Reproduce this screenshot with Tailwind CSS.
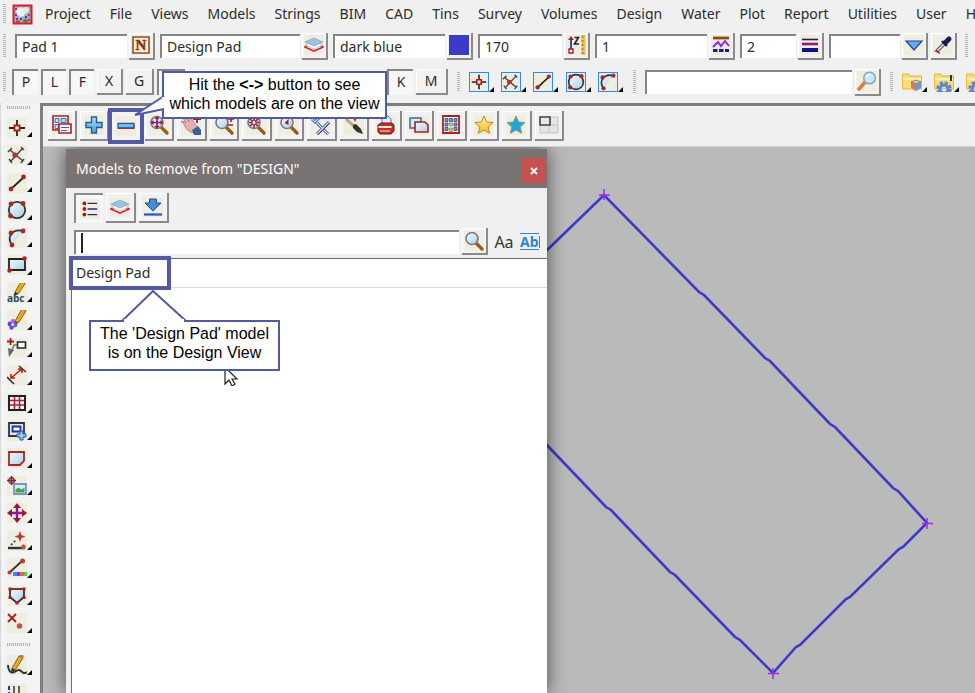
<!DOCTYPE html>
<html lang="en">
<head>
  <meta charset="UTF-8">
  <meta name="viewport" content="width=device-width, initial-scale=1.0">
  <title>DESIGN view</title>
  <script src="https://cdn.jsdelivr.net/npm/@tailwindcss/browser@4"></script>
</head>
<body class="relative flex h-screen flex-col overflow-hidden bg-[#f0f0f0] font-['Noto_Sans','Open_Sans',sans-serif] text-sm text-[#2b2b2b]">

  <!-- Gradients stay outside the hidden icon library, or they are not painted -->
  <svg class="absolute size-0" aria-hidden="true">
    <defs>
      <linearGradient id="sky" x1="0" y1="0" x2="1" y2="1"><stop offset="0" stop-color="#f4fafe"/><stop offset="1" stop-color="#a9cfe6"/></linearGradient>
      <linearGradient id="plus" x1="0" y1="0" x2="0" y2="1"><stop offset="0" stop-color="#9fdcfb"/><stop offset="1" stop-color="#4aa3dc"/></linearGradient>
      <linearGradient id="gold" x1="0" y1="0" x2="0" y2="1"><stop offset="0" stop-color="#fff3a0"/><stop offset="1" stop-color="#f5b81c"/></linearGradient>
    </defs>
  </svg>

  <!-- Icon library -->
  <svg class="hidden" aria-hidden="true">
    <symbol id="i-point" viewBox="0 0 20 20"><path d="M10 2v16M2 10h16" stroke="#222" stroke-width="1.800"/><path d="M7.500 7.500h5v5h-5z" fill="#fff" stroke="#b01818" stroke-width="1.800"/></symbol>
    <symbol id="i-cross" viewBox="0 0 20 20"><path d="M3 5l13 11M15 4L4 16M1 7l4-4M14 2l3 3M2 14l3 4M14 18l3-4" stroke="#444" stroke-width="1.500" fill="none"/><circle cx="8" cy="10" r="2.600" fill="#b03030"/></symbol>
    <symbol id="i-line" viewBox="0 0 20 20"><path d="M4 16L17 4" stroke="#222" stroke-width="1.800"/><circle cx="4" cy="16" r="2.400" fill="#a52a2a"/><circle cx="16.500" cy="4" r="2.400" fill="#a52a2a"/></symbol>
    <symbol id="i-circle" viewBox="0 0 20 20"><circle cx="10" cy="10" r="8.200" fill="url(#sky)" stroke="#333" stroke-width="1.800"/><g fill="#a52a2a"><circle cx="4" cy="4" r="2.400"/><circle cx="16" cy="3.500" r="2.400"/><circle cx="3.500" cy="16" r="2.400"/></g></symbol>
    <symbol id="i-arc" viewBox="0 0 20 20"><path d="M5 17C-1 9 6 0 16 3" fill="url(#sky)" stroke="#333" stroke-width="1.800"/><g fill="#a52a2a"><circle cx="5" cy="17" r="2.400"/><circle cx="4" cy="5" r="2.400"/><circle cx="16" cy="3" r="2.400"/></g></symbol>
    <symbol id="i-rect" viewBox="0 0 20 20"><path d="M2 4h16v11H2z" fill="url(#sky)" stroke="#222" stroke-width="1.800"/><circle cx="2.500" cy="15.500" r="2.200" fill="#b02020"/><circle cx="17.500" cy="3.500" r="2.200" fill="#b02020"/></symbol>
    <symbol id="i-pencil" viewBox="0 0 20 20"><path d="M8 13L15 1l4 2-7 11-4 2z" fill="#e7a81c" stroke="#6b4a10" stroke-width=".8"/><path d="M15 1l4 2 1-2-3-2z" fill="#d06a6a"/><path d="M8 13l-1 4 4-2z" fill="#222"/></symbol>
    <symbol id="i-text" viewBox="0 0 20 20"><use href="#i-pencil" x="0" y="-4" width="20" height="20"/><text x="0" y="19" font-size="10" font-weight="700" font-family="Open Sans" fill="#2d4a66">abc</text></symbol>
    <symbol id="i-symbol" viewBox="0 0 20 20"><use href="#i-pencil" y="-2" width="20" height="20"/><circle cx="3" cy="14" r="2.400" fill="#4a4adf"/><circle cx="6" cy="11.500" r="2.400" fill="#c05ad0"/><circle cx="8" cy="15" r="2.400" fill="#3a7ae0"/><circle cx="4.500" cy="17.500" r="2.200" fill="#8a3ad0"/><circle cx="5.500" cy="14.500" r="1.300" fill="#fff"/></symbol>
    <symbol id="i-leader" viewBox="0 0 20 20"><path d="M3.500 0v7M0 3.500h7" stroke="#b01818" stroke-width="1.800"/><path d="M10.500 4h8v6h-8z" fill="#fff" stroke="#222" stroke-width="1.600"/><path d="M10 7H7l-2 5" stroke="#777" stroke-width="1.600" fill="none"/><path d="M1 10l6 2-5 7z" fill="#666"/></symbol>
    <symbol id="i-dimension" viewBox="0 0 20 20"><path d="M12 1l7 6M0 12l7 7" stroke="#333" stroke-width="1.600"/><path d="M4 13L15 4M4 9v4h4M11 4h4v4" stroke="#b02020" stroke-width="1.600" fill="none"/></symbol>
    <symbol id="i-table" viewBox="0 0 20 20"><path d="M2 3h16v14H2z" fill="#f2f6fa" stroke="#222" stroke-width="2"/><path d="M7.500 4v12M12.500 4v12M3 7.500h14M3 12h14" stroke="#a8243a" stroke-width="1.600"/></symbol>
    <symbol id="i-viewport" viewBox="0 0 20 20"><path d="M2 2h15v13H2z" fill="#dbe9f2" stroke="#333" stroke-width="1.800"/><path d="M5.500 5.500h8v5h-8z" fill="#fff" stroke="#2a2ab0" stroke-width="1.800"/><path d="M13 10h3v3h3v3h-3v3h-3v-3h-3v-3h3z" fill="#8fd0f5" stroke="#27519c"/></symbol>
    <symbol id="i-polygon" viewBox="0 0 20 20"><path d="M2 4h15v9l-4 4H2z" fill="url(#sky)" stroke="#a82828" stroke-width="1.800"/></symbol>
    <symbol id="i-image" viewBox="0 0 20 20"><path d="M4.500 0v9M0 4.500h9" stroke="#2a3a80" stroke-width="1.600"/><circle cx="4.500" cy="4.500" r="2.800" fill="none" stroke="#a82020" stroke-width="1.400"/><path d="M7 8h12v10H7z" fill="#d6ecfb" stroke="#5b78b8" stroke-width="1.400"/><path d="M8.500 16.500v-3l3-2 3 2 3-2v5z" fill="#3ea83e"/></symbol>
    <symbol id="i-move" viewBox="0 0 20 20"><path d="M10 3v14M3 10h14" stroke="#8a1a9a" stroke-width="2.400"/><path d="M10 0l4 5H6zM10 20l4-5H6zM0 10l5-4v8zM20 10l-5-4v8z" fill="#a01830"/></symbol>
    <symbol id="i-trace" viewBox="0 0 20 20"><path d="M13 0l1.500 4 4 1.500-4 1.500L13 11l-1.500-4-4-1.500 4-1.500z" fill="#b04040"/><path d="M4 14l5-5" stroke="#333" stroke-width="1.600" stroke-dasharray="2 2"/><path d="M1 17h17" stroke="#333" stroke-width="2.400"/><circle cx="16.500" cy="16" r="2.400" fill="#b55"/></symbol>
    <symbol id="i-colour" viewBox="0 0 20 20"><path d="M2 15L15 3" stroke="#333" stroke-width="1.800"/><circle cx="15.500" cy="3" r="2.500" fill="#a44"/><circle cx="2.500" cy="14.500" r="2" fill="#a44"/><path d="M6 14h4v4H6z" fill="#2a8aff"/><path d="M10 14h3.500v4H10z" fill="#9a2ad0"/><path d="M13.500 14H17v4h-3.500z" fill="#ff5a2a"/><path d="M17 14h3v4h-3z" fill="#3ae03a"/></symbol>
    <symbol id="i-shield" viewBox="0 0 20 20"><path d="M3 3h14v8l-7 6-7-6z" fill="url(#sky)" stroke="#333" stroke-width="1.800"/><path d="M3 3h14" stroke="#a82828" stroke-width="1.600"/><g fill="#b02020"><path d="M1.500 1.500h3v3h-3zM15.500 1.500h3v3h-3zM1.500 10h3v3h-3zM15.500 10h3v3h-3zM8.500 15.500h3v3h-3z"/></g></symbol>
    <symbol id="i-delete" viewBox="0 0 20 20"><path d="M1 1l8 8M9 1L1 9" stroke="#a82020" stroke-width="1.800"/><circle cx="12.500" cy="13" r="2.800" fill="#b55"/></symbol>
    <symbol id="i-freehand" viewBox="0 0 20 20"><use href="#i-pencil" x="-3" y="0" width="20" height="20"/><path d="M1 10c0 4 2 9 6 7s5-3 7-1 3 3 6 1" fill="none" stroke="#333" stroke-width="2"/></symbol>
    <symbol id="i-ruler" viewBox="0 0 20 20"><path d="M2 2v18" stroke="#2a3a9a" stroke-width="2" stroke-dasharray="4 2"/><path d="M7 2v18M12 2v18" stroke="#333" stroke-width="1.500"/></symbol>

    <symbol id="i-name" viewBox="0 0 20 20"><path d="M2 2h16v16H2z" fill="#fdf0e0" stroke="#9a4a1a" stroke-width="1.600"/><text x="10" y="15" text-anchor="middle" font-size="15" font-weight="700" font-family="Liberation Serif" fill="#8a3a10" stroke="#8a3a10" stroke-width=".6">N</text></symbol>
    <symbol id="i-layers" viewBox="0 0 20 20"><path d="M1 12l9-4 9 4-9 4z" fill="#fff" stroke="#d02a2a" stroke-width="1.600"/><path d="M1 10l9-4 9 4-9 4z" fill="#f0f6fa" stroke="#a9bcc8" stroke-width=".8"/><path d="M1 7l9-4 9 4-9 4z" fill="#9cc3dd" stroke="#86a9c0" stroke-width=".8"/></symbol>
    <symbol id="i-height" viewBox="0 0 20 20"><path d="M5 3v12" stroke="#2a3a9a" stroke-width="1.800"/><path d="M2 5l3-4 3 4z" fill="#a82020"/><path d="M3 14h4v4H3z" fill="#fff" stroke="#a82020" stroke-width="1.400"/><path d="M8.500 2.500h4L8.500 9h4.500" fill="none" stroke="#222" stroke-width="1.600"/><path d="M15.500 0h4v20h-4z" fill="#f0c050"/><path d="M15.500 2h2M15.500 6h2M15.500 10h2M15.500 14h2M15.500 18h2" stroke="#805a10"/></symbol>
    <symbol id="i-style" viewBox="0 0 20 20"><path d="M2 3h16" stroke="#8a4a10" stroke-width="2.800"/><path d="M2 12l5-5 3 4 4-5 4 5" fill="none" stroke="#8a2af0" stroke-width="2"/><path d="M2 15.500h16" stroke="#1a1a8a" stroke-width="3" stroke-dasharray="4.500 1.500"/></symbol>
    <symbol id="i-weight" viewBox="0 0 20 20"><path d="M2 4.500h16" stroke="#222" stroke-width="1.600"/><path d="M2 9h16" stroke="#8a1a8a" stroke-width="2.600"/><path d="M2 15h16" stroke="#10108a" stroke-width="4"/></symbol>
    <symbol id="i-drop" viewBox="0 0 20 20"><path d="M2 6h16l-8 9z" fill="#6aa8f0" stroke="#1c4a98" stroke-width="1.200"/></symbol>
    <symbol id="i-dropper" viewBox="0 0 20 20"><path d="M4 16l8-8" stroke="#444" stroke-width="3.600"/><path d="M4 16l8-8" stroke="#e8eef2" stroke-width="1.600"/><path d="M9 6l5 5" stroke="#141c3a" stroke-width="2.400"/><path d="M12.500 7.500L16 4" stroke="#141c5a" stroke-width="5" stroke-linecap="round"/><path d="M1 16c2-2 6 0 6 3z" fill="#b02020"/></symbol>
    <symbol id="i-find" viewBox="0 0 20 20"><path d="M2 18l7-8" stroke="#d8803a" stroke-width="3.600" stroke-linecap="round"/><circle cx="12.500" cy="7" r="5.800" fill="#c6ebfb" stroke="#8aa8c0" stroke-width="1.600"/><path d="M9 6c1-2 3-3 5-2" stroke="#fff" stroke-width="1.600" fill="none"/></symbol>
    <symbol id="i-glass" viewBox="0 0 20 20"><path d="M12.500 12.500l5.500 5.500" stroke="#9a5a20" stroke-width="3.200" stroke-linecap="round"/><circle cx="8" cy="7.500" r="6" fill="url(#sky)" stroke="#778" stroke-width="1.600"/></symbol>
    <symbol id="i-folder" viewBox="0 0 20 20"><path d="M.500 2h6.500l2 2h10.500v13H.500z" fill="#f9dc7c" stroke="#e3b840"/><path d="M1 7h18" stroke="#fbeeb0" stroke-width="2"/></symbol>
    <symbol id="i-folder-cube" viewBox="0 0 20 20"><use href="#i-folder"/><path d="M9 10l5-2 5 2v6l-5 3-5-3z" fill="#d87a5a"/><path d="M14 12v7l5-3v-6z" fill="#6aa0c8"/><path d="M9 10l5-2 5 2-5 2z" fill="#cfc8b8" stroke="#666" stroke-width=".6"/></symbol>
    <symbol id="i-folder-gear" viewBox="0 0 20 20"><use href="#i-folder"/><path d="M17 3v6" stroke="#222" stroke-width="1.800"/><circle cx="10" cy="17" r="6" fill="none" stroke="#5a86d8" stroke-width="3.500" stroke-dasharray="3 1.700"/><circle cx="10" cy="17" r="4" fill="none" stroke="#5a86d8" stroke-width="3"/></symbol>

    <symbol id="i-views" viewBox="0 0 20 20"><path d="M1 1h15v14H1z" fill="#fff" stroke="#b02020" stroke-width="1.600"/><path d="M3 3.500h4v4H3zM9 3.500h5v4H9zM3 9.500h4v4H3z" fill="#b8dcf4" stroke="#3a6aa8"/><path d="M7 9h12v9H7z" fill="#eaf5fc" stroke="#b02020" stroke-width="1.600"/><path d="M9 12.500h8M9 15.500h6" stroke="#3a6aa8"/></symbol>
    <symbol id="i-add" viewBox="0 0 20 20"><path d="M7.500 2h5v5.500H18v5h-5.500V18h-5v-5.500H2v-5h5.500z" fill="url(#plus)" stroke="#2a5a98" stroke-width="1.400"/></symbol>
    <symbol id="i-remove" viewBox="0 0 20 20"><path d="M2 7.500h16v4.500H2z" fill="url(#plus)" stroke="#2a5a98" stroke-width="1.300"/><path d="M2 12.500h16V8" fill="none" stroke="#a03048"/></symbol>
    <symbol id="i-fit" viewBox="0 0 20 20"><use href="#i-glass"/><path d="M8 2.500v10M3 7.500h10" stroke="#8a1a6a" stroke-width="1.600"/><path d="M8 1l2.500 3h-5zM8 14l2.500-3h-5zM1.500 7.500l3-2.500v5zM14.500 7.500l-3-2.500v5z" fill="#a01830"/></symbol>
    <symbol id="i-pan" viewBox="0 0 20 20"><path d="M0 7l2-1 3 2-3-5 2-1 4 5-2-5 2-1 6 8 3 4-4 5c-5-1-8-3-11-11z" fill="#e6b0b0" stroke="#b07070" stroke-width=".8"/><path d="M11 15l6-4 3 4v5h-7z" fill="#3a6098"/><path d="M16 0v8M12 4h8" stroke="#b01830" stroke-width="1.800"/></symbol>
    <symbol id="i-zoom" viewBox="0 0 20 20"><use href="#i-glass"/><path d="M14 4h6M17 1v6M13 10h6" stroke="#a82020" stroke-width="1.600"/></symbol>
    <symbol id="i-zoom-in" viewBox="0 0 20 20"><use href="#i-glass"/><path d="M4 4l8 7M12 4l-8 7M8 2v11M3 7.500h10" stroke="#a01828" stroke-width="1.500"/><circle cx="8" cy="7.500" r="1.500" fill="#fff"/></symbol>
    <symbol id="i-zoom-back" viewBox="0 0 20 20"><use href="#i-glass"/><path d="M9.500 4v6l-4-2z" fill="#b01818"/></symbol>
    <symbol id="i-toggle" viewBox="0 0 20 20"><path d="M1 4l3 3 7-7M6 8l11 11M18 7L6 19" stroke="#2a5a98" stroke-width="3" fill="none"/><path d="M1 4l3 3 7-7M6 8l11 11M18 7L6 19" stroke="#bfe2f8" stroke-width="1.200" fill="none"/><path d="M19 8L7 20" stroke="#a82020"/></symbol>
    <symbol id="i-brush" viewBox="0 0 20 20"><path d="M2 4l9 8" stroke="#b8a878" stroke-width="3"/><path d="M9 10l3-1 5 5 2 5-6-2-4-4z" fill="#333"/><path d="M8 1l5 1-2 5z" fill="#b02020"/></symbol>
    <symbol id="i-print" viewBox="0 0 20 20"><path d="M6 9V1h6l3 3v5z" fill="#d8eefa" stroke="#4a80b8"/><path d="M2 10l3-2h11l2 2v6l-3 3H4l-2-2z" fill="#c03030" stroke="#701818"/><path d="M2.500 12h13" stroke="#f8eac8" stroke-width="2"/><path d="M4 16h10" stroke="#f0b0a0" stroke-width="1.400"/></symbol>
    <symbol id="i-copy" viewBox="0 0 20 20"><path d="M1 3h11v10H1z" fill="#d5ebf7" stroke="#3a6a98" stroke-width="1.500"/><path d="M6 7h10l3 3v7H6z" fill="url(#sky)" stroke="#a82020" stroke-width="1.600"/></symbol>
    <symbol id="i-building" viewBox="0 0 20 20"><path d="M2 1h16v17H2z" fill="#eef6fc" stroke="#a82020" stroke-width="1.800"/><path d="M4 3.500h3v3H4zM8.500 3.500h3v3h-3zM13 3.500h3v3h-3zM4 8h3v3H4zM13 8h3v3h-3zM4 12.500h3v3H4zM13 12.500h3v3h-3z" fill="#7a98c0" stroke="#3a4a78" stroke-width=".8"/><path d="M8.500 8h3v3h-3zM8.500 13h3v4h-3z" fill="#d8c060" stroke="#777" stroke-width=".6"/></symbol>
    <symbol id="i-star" viewBox="0 0 20 20"><path d="M10 1l2.600 6 6.400.6-4.800 4.300 1.400 6.400L10 15l-5.600 3.300 1.400-6.400L1 7.600 7.400 7z" fill="url(#gold)" stroke="#c08a18"/></symbol>
    <symbol id="i-star-blue" viewBox="0 0 20 20"><path d="M10 1l2.600 6 6.400.6-4.800 4.300 1.400 6.400L10 15l-5.600 3.300 1.400-6.400L1 7.600 7.400 7z" fill="#1fa4dc" stroke="#8a9a78"/></symbol>
    <symbol id="i-split" viewBox="0 0 20 20"><path d="M1 2h18v16H1z" fill="#e4e4e4" stroke="#c4c4c4"/><path d="M10 10h9M10 10v8" stroke="#c4c4c4"/><path d="M1 2h10v8H1z" fill="#e8e8e8" stroke="#444" stroke-width="1.600"/></symbol>
    <symbol id="i-list" viewBox="0 0 20 20"><g fill="#a01818"><circle cx="3" cy="3" r="2.400"/><circle cx="3" cy="10" r="2.400"/><circle cx="3" cy="17" r="2.400"/></g><path d="M7 3h12M7 10h12M7 17h12" stroke="#2a2a8a" stroke-width="1.800"/></symbol>
    <symbol id="i-download" viewBox="0 0 20 20"><path d="M6.500 2h7v4H18l-8 8-8-8h4.500z" fill="#4a8ad8" stroke="#1c4a98"/><path d="M1 17.500h18" stroke="#1f5cb8" stroke-width="2.200"/></symbol>
  </svg>

  <!-- Menu bar -->
  <nav class="flex h-7 shrink-0 items-center gap-[19px] pl-[3px] whitespace-nowrap">
    <div class="-mr-[7px] flex items-center gap-1.5">
      <span class="h-5 w-[3px] bg-[repeating-linear-gradient(#b5b5b5_0_1px,#f0f0f0_1px_2px)]"></span>
      <svg class="size-[21px]" viewBox="0 0 21 21"><path d="M1.500 1.500h18v18h-18z" fill="#a3adb4" stroke="#d41f2c" stroke-width="2"/><circle cx="9" cy="8" r="4" fill="#edf4f6" stroke="#edf4f6" stroke-width="2" stroke-dasharray="2 1"/><circle cx="14" cy="6" r="3" fill="#dcebf0"/><path d="M3 10h2v2H3zM4 14h2v2H4zM8 14h2v2H8zM13 12h2v2h-2z" fill="#6a2ad0"/><path d="M4 17.500h4" stroke="#d02020" stroke-width="1.500"/><path d="M11 17h5M13.500 14.500v5" stroke="#208a30" stroke-width="1.500"/><path d="M3 4h2v2H3zM16 10h2v2h-2zM16 15h2v2h-2z" fill="#c03060"/></svg>
    </div>
    <a href="#">Project</a>
    <a href="#">File</a>
    <a href="#">Views</a>
    <a href="#">Models</a>
    <a href="#">Strings</a>
    <a href="#">BIM</a>
    <a href="#">CAD</a>
    <a href="#">Tins</a>
    <a href="#">Survey</a>
    <a href="#">Volumes</a>
    <a href="#">Design</a>
    <a href="#">Water</a>
    <a href="#">Plot</a>
    <a href="#">Report</a>
    <a href="#">Utilities</a>
    <a href="#">User</a>
    <a href="#">Help</a>
  </nav>

  <!-- String attributes -->
  <form class="flex h-9 shrink-0 items-center gap-[5px] pl-[3px]">
    <span class="mr-1 h-6 w-[3px] shrink-0 bg-[repeating-linear-gradient(#b5b5b5_0_1px,#f0f0f0_1px_2px)]"></span>
    <div class="flex shrink-0 items-center gap-[2px]">
      <input type="text" aria-label="Name" value="Pad 1" class="h-6 w-28 border-t-2 border-l-2 border-[#858585] bg-white px-[5px] pb-[2px]">
      <button type="button" aria-label="Pick name" class="flex h-[27px] w-[26px] items-center justify-center border-r-2 border-b-2 border-[#8a8a8a] bg-[#f2f2f2] shadow-[inset_1px_1px_0_#fff]"><svg class="size-5 bg-[#efeddf]"><use href="#i-name"/></svg></button>
    </div>
    <div class="flex shrink-0 items-center gap-[2px]">
      <input type="text" aria-label="Model" value="Design Pad" class="h-6 w-[140px] border-t-2 border-l-2 border-[#858585] bg-white px-[5px] pb-[2px]">
      <button type="button" aria-label="Pick model" class="flex h-[27px] w-[26px] items-center justify-center border-r-2 border-b-2 border-[#8a8a8a] bg-[#f2f2f2] shadow-[inset_1px_1px_0_#fff]"><svg class="size-5 bg-[#efeddf]"><use href="#i-layers"/></svg></button>
    </div>
    <div class="flex shrink-0 items-center gap-[2px]">
      <input type="text" aria-label="Colour" value="dark blue" class="h-6 w-28 border-t-2 border-l-2 border-[#858585] bg-white px-[5px] pb-[2px]">
      <button type="button" aria-label="Pick colour" class="flex h-[27px] w-[26px] items-center justify-center border-r-2 border-b-2 border-[#8a8a8a] bg-[#f2f2f2] shadow-[inset_1px_1px_0_#fff]"><span class="size-5 bg-[#3c3ac8]"></span></button>
    </div>
    <div class="flex shrink-0 items-center gap-[2px]">
      <input type="text" aria-label="Height" value="170" class="h-6 w-[84px] border-t-2 border-l-2 border-[#858585] bg-white px-[5px] pb-[2px]">
      <button type="button" aria-label="Pick height" class="flex h-[27px] w-[26px] items-center justify-center border-r-2 border-b-2 border-[#8a8a8a] bg-[#f2f2f2] shadow-[inset_1px_1px_0_#fff]"><svg class="size-5 bg-[#efeddf]"><use href="#i-height"/></svg></button>
    </div>
    <div class="flex shrink-0 items-center gap-[2px]">
      <input type="text" aria-label="Line style" value="1" class="h-6 w-28 border-t-2 border-l-2 border-[#858585] bg-white px-[5px] pb-[2px]">
      <button type="button" aria-label="Pick line style" class="flex h-[27px] w-[26px] items-center justify-center border-r-2 border-b-2 border-[#8a8a8a] bg-[#f2f2f2] shadow-[inset_1px_1px_0_#fff]"><svg class="size-5 bg-[#efeddf]"><use href="#i-style"/></svg></button>
    </div>
    <div class="flex shrink-0 items-center gap-[2px]">
      <input type="text" aria-label="Weight" value="2" class="h-6 w-14 border-t-2 border-l-2 border-[#858585] bg-white px-[5px] pb-[2px]">
      <button type="button" aria-label="Pick weight" class="flex h-[27px] w-[26px] items-center justify-center border-r-2 border-b-2 border-[#8a8a8a] bg-[#f2f2f2] shadow-[inset_1px_1px_0_#fff]"><svg class="size-5 bg-[#efeddf]"><use href="#i-weight"/></svg></button>
    </div>
    <div class="flex shrink-0 items-center gap-[2px]">
      <input type="text" aria-label="Tinable" value="" class="h-6 w-[71px] border-t-2 border-l-2 border-[#858585] bg-white px-[5px] pb-[2px]">
      <button type="button" aria-label="Pick tinable" class="flex h-[27px] w-[26px] items-center justify-center border-r-2 border-b-2 border-[#8a8a8a] bg-[#f2f2f2] shadow-[inset_1px_1px_0_#fff]"><svg class="size-5 bg-[#efeddf]"><use href="#i-drop"/></svg></button>
    </div>
    <button type="button" aria-label="Same as" class="-ml-[2px] flex h-[27px] w-[26px] shrink-0 items-center justify-center border-r-2 border-b-2 border-[#8a8a8a] bg-[#f2f2f2] shadow-[inset_1px_1px_0_#fff]"><svg class="size-5 bg-[#efeddf]"><use href="#i-dropper"/></svg></button>
    <span class="ml-[3px] h-6 w-[3px] shrink-0 bg-[repeating-linear-gradient(#b5b5b5_0_1px,#f0f0f0_1px_2px)]"></span>
  </form>

  <!-- Snaps, CAD tools, search -->
  <div class="flex h-[39px] shrink-0 items-center pb-[3px] pl-[3px]">
    <span class="mr-[6px] h-5 w-[3px] shrink-0 bg-[repeating-linear-gradient(#b5b5b5_0_1px,#f0f0f0_1px_2px)]"></span>
    <div class="flex shrink-0 gap-[3px]">
      <button class="h-[26px] w-[26px] border-t-2 border-l-2 border-[#858585] bg-[#f7f7f7] pb-[3px]">P</button>
      <button class="h-[26px] w-[25px] border-t-2 border-l-2 border-[#858585] bg-[#f7f7f7] pb-[3px]">L</button>
      <button class="h-[26px] w-[25px] border-t-2 border-l-2 border-[#858585] bg-[#f7f7f7] pb-[3px]">F</button>
      <button class="h-[26px] w-[26px] border-r-2 border-b-2 border-[#8a8a8a] bg-[#f2f2f2] shadow-[inset_1px_1px_0_#fff]">X</button>
      <button class="h-[26px] w-[28px] border-r-2 border-b-2 border-[#8a8a8a] bg-[#f2f2f2] shadow-[inset_1px_1px_0_#fff]">G</button>
      <button aria-label="Cursor snap" class="h-[26px] w-[28px] border-t-2 border-l-2 border-[#858585] bg-[#f7f7f7]"></button>
    </div>
    <div class="ml-auto flex w-[788px] shrink-0 items-center pl-[200px]">
      <button class="h-[26px] w-[26px] border-t-2 border-l-2 border-[#858585] bg-[#f7f7f7] pb-[3px]">K</button>
      <button class="ml-[3px] h-[26px] w-8 border-r-2 border-b-2 border-[#8a8a8a] bg-[#f2f2f2] shadow-[inset_1px_1px_0_#fff]">M</button>
      <span class="mx-[9px] h-5 w-[3px] shrink-0 bg-[repeating-linear-gradient(#b5b5b5_0_1px,#f0f0f0_1px_2px)]"></span>
      <div class="flex shrink-0 gap-[7px]">
        <button aria-label="Point" class="flex w-[25px] items-end"><svg class="size-5 border border-[#2b8cf0] bg-[#efeddf]"><use href="#i-point"/></svg><svg class="size-[5px]" viewBox="0 0 5 5"><path d="M5 0v5H0z"/></svg></button>
        <button aria-label="Intersection" class="flex w-[25px] items-end"><svg class="size-5 border border-[#2b8cf0] bg-[#efeddf]"><use href="#i-cross"/></svg><svg class="size-[5px]" viewBox="0 0 5 5"><path d="M5 0v5H0z"/></svg></button>
        <button aria-label="Line" class="flex w-[26px] items-end"><svg class="size-5 border border-[#2b8cf0] bg-[#efeddf]"><use href="#i-line"/></svg><svg class="size-[5px]" viewBox="0 0 5 5"><path d="M5 0v5H0z"/></svg></button>
        <button aria-label="Circle" class="flex w-[25px] items-end"><svg class="size-5 border border-[#2b8cf0] bg-[#efeddf]"><use href="#i-circle"/></svg><svg class="size-[5px]" viewBox="0 0 5 5"><path d="M5 0v5H0z"/></svg></button>
        <button aria-label="Arc" class="flex w-[26px] items-end"><svg class="size-5 border border-[#2b8cf0] bg-[#efeddf]"><use href="#i-arc"/></svg><svg class="size-[5px]" viewBox="0 0 5 5"><path d="M5 0v5H0z"/></svg></button>
      </div>
      <span class="mx-[9px] h-6 w-[3px] shrink-0 bg-[repeating-linear-gradient(#b5b5b5_0_1px,#f0f0f0_1px_2px)]"></span>
      <input type="search" aria-label="Search commands" class="h-6 min-w-0 flex-1 border-t-2 border-l-2 border-[#858585] bg-white px-[5px]">
      <button aria-label="Search" class="ml-[3px] flex h-[27px] w-[26px] shrink-0 items-center justify-center border-r-2 border-b-2 border-[#8a8a8a] bg-[#f2f2f2] shadow-[inset_1px_1px_0_#fff]"><svg class="size-5 bg-[#efeddf]"><use href="#i-find"/></svg></button>
      <span class="mx-[9px] h-5 w-[3px] shrink-0 bg-[repeating-linear-gradient(#b5b5b5_0_1px,#f0f0f0_1px_2px)]"></span>
      <div class="flex w-[73px] shrink-0 gap-[7px] overflow-hidden">
        <button aria-label="Project folder" class="flex w-[25px] shrink-0 items-end"><svg class="size-5"><use href="#i-folder-cube"/></svg><svg class="size-[5px]" viewBox="0 0 5 5"><path d="M5 0v5H0z"/></svg></button>
        <button aria-label="Setup folder" class="flex w-[25px] shrink-0 items-end"><svg class="size-5"><use href="#i-folder-gear"/></svg><svg class="size-[5px]" viewBox="0 0 5 5"><path d="M5 0v5H0z"/></svg></button>
        <button aria-label="User folder" class="flex w-[25px] shrink-0 items-end"><svg class="size-5"><use href="#i-folder-gear"/></svg></button>
      </div>
    </div>
  </div>

  <div class="flex min-h-0 flex-1">
    <!-- CAD side bar -->
    <aside class="flex w-10 shrink-0 flex-col items-start overflow-hidden border-l border-[#d8d8d8] bg-[#f3f3f3] pt-[3px] pl-[6px]">
      <span class="mb-[5px] h-[3px] w-6 shrink-0 bg-[repeating-linear-gradient(90deg,#b5b5b5_0_1px,#f0f0f0_1px_2px)]"></span>
      <div class="grid h-[523px] shrink-0 auto-rows-fr content-stretch">
        <button aria-label="Create point" class="flex items-center"><svg class="size-5 bg-[#efeddf]"><use href="#i-point"/></svg><svg class="mt-3.5 size-[5px]" viewBox="0 0 5 5"><path d="M5 0v5H0z"/></svg></button>
        <button aria-label="Create intersection" class="flex items-center"><svg class="size-5 bg-[#efeddf]"><use href="#i-cross"/></svg><svg class="mt-3.5 size-[5px]" viewBox="0 0 5 5"><path d="M5 0v5H0z"/></svg></button>
        <button aria-label="Create line" class="flex items-center"><svg class="size-5 bg-[#efeddf]"><use href="#i-line"/></svg><svg class="mt-3.5 size-[5px]" viewBox="0 0 5 5"><path d="M5 0v5H0z"/></svg></button>
        <button aria-label="Create circle" class="flex items-center"><svg class="size-5 bg-[#efeddf]"><use href="#i-circle"/></svg><svg class="mt-3.5 size-[5px]" viewBox="0 0 5 5"><path d="M5 0v5H0z"/></svg></button>
        <button aria-label="Create arc" class="flex items-center"><svg class="size-5 bg-[#efeddf]"><use href="#i-arc"/></svg><svg class="mt-3.5 size-[5px]" viewBox="0 0 5 5"><path d="M5 0v5H0z"/></svg></button>
        <button aria-label="Create rectangle" class="flex items-center"><svg class="size-5 bg-[#efeddf]"><use href="#i-rect"/></svg><svg class="mt-3.5 size-[5px]" viewBox="0 0 5 5"><path d="M5 0v5H0z"/></svg></button>
        <button aria-label="Create text" class="flex items-center"><svg class="size-5 bg-[#efeddf]"><use href="#i-text"/></svg><svg class="mt-3.5 size-[5px]" viewBox="0 0 5 5"><path d="M5 0v5H0z"/></svg></button>
        <button aria-label="Create symbol" class="flex items-center"><svg class="size-5 bg-[#efeddf]"><use href="#i-symbol"/></svg><svg class="mt-3.5 size-[5px]" viewBox="0 0 5 5"><path d="M5 0v5H0z"/></svg></button>
        <button aria-label="Leader" class="flex items-center"><svg class="size-5 bg-[#efeddf]"><use href="#i-leader"/></svg><svg class="mt-3.5 size-[5px]" viewBox="0 0 5 5"><path d="M5 0v5H0z"/></svg></button>
        <button aria-label="Dimension" class="flex items-center"><svg class="size-5 bg-[#efeddf]"><use href="#i-dimension"/></svg><svg class="mt-3.5 size-[5px]" viewBox="0 0 5 5"><path d="M5 0v5H0z"/></svg></button>
        <button aria-label="Table" class="flex items-center"><svg class="size-5 bg-[#efeddf]"><use href="#i-table"/></svg><svg class="mt-3.5 size-[5px]" viewBox="0 0 5 5"><path d="M5 0v5H0z"/></svg></button>
        <button aria-label="Viewport" class="flex items-center"><svg class="size-5 bg-[#efeddf]"><use href="#i-viewport"/></svg><svg class="mt-3.5 size-[5px]" viewBox="0 0 5 5"><path d="M5 0v5H0z"/></svg></button>
        <button aria-label="Polygon" class="flex items-center"><svg class="size-5 bg-[#efeddf]"><use href="#i-polygon"/></svg><svg class="mt-3.5 size-[5px]" viewBox="0 0 5 5"><path d="M5 0v5H0z"/></svg></button>
        <button aria-label="Image" class="flex items-center"><svg class="size-5 bg-[#efeddf]"><use href="#i-image"/></svg><svg class="mt-3.5 size-[5px]" viewBox="0 0 5 5"><path d="M5 0v5H0z"/></svg></button>
        <button aria-label="Move" class="flex items-center"><svg class="size-5 bg-[#efeddf]"><use href="#i-move"/></svg><svg class="mt-3.5 size-[5px]" viewBox="0 0 5 5"><path d="M5 0v5H0z"/></svg></button>
        <button aria-label="Append" class="flex items-center"><svg class="size-5 bg-[#efeddf]"><use href="#i-trace"/></svg><svg class="mt-3.5 size-[5px]" viewBox="0 0 5 5"><path d="M5 0v5H0z"/></svg></button>
        <button aria-label="Change colour" class="flex items-center"><svg class="size-5 bg-[#efeddf]"><use href="#i-colour"/></svg><svg class="mt-3.5 size-[5px]" viewBox="0 0 5 5"><path d="M5 0v5H0z"/></svg></button>
        <button aria-label="Edit polygon" class="flex items-center"><svg class="size-5 bg-[#efeddf]"><use href="#i-shield"/></svg><svg class="mt-3.5 size-[5px]" viewBox="0 0 5 5"><path d="M5 0v5H0z"/></svg></button>
        <button aria-label="Delete point" class="flex items-center"><svg class="size-5 bg-[#efeddf]"><use href="#i-delete"/></svg><svg class="mt-3.5 size-[5px]" viewBox="0 0 5 5"><path d="M5 0v5H0z"/></svg></button>
      </div>
      <span class="mt-[6px] mb-[9px] h-[3px] w-6 shrink-0 bg-[repeating-linear-gradient(90deg,#b5b5b5_0_1px,#f0f0f0_1px_2px)]"></span>
      <button aria-label="Freehand" class="mb-[9px] flex shrink-0 items-center"><svg class="size-5 bg-[#efeddf]"><use href="#i-freehand"/></svg><svg class="mt-3.5 size-[5px]" viewBox="0 0 5 5"><path d="M5 0v5H0z"/></svg></button>
      <button aria-label="Measure" class="flex shrink-0 items-center"><svg class="size-5 bg-[#efeddf]"><use href="#i-ruler"/></svg></button>
    </aside>

    <!-- Plan view window -->
    <main class="flex min-w-0 flex-1 flex-col border-t-3 border-l-3 border-[#7d7f7d]">
      <div class="flex h-[41px] shrink-0 items-center gap-[3px] border-b border-[#cfcfcf] pl-[5px]">
        <button aria-label="View menu" class="flex h-[30px] w-[29px] items-center justify-center border-r-2 border-b-2 border-[#8a8a8a] bg-[#f2f2f2] shadow-[inset_1px_1px_0_#fff]"><svg class="size-5 bg-[#efeddf]"><use href="#i-views"/></svg></button>
        <button aria-label="Add model" class="flex h-[30px] w-[29px] items-center justify-center border-r-2 border-b-2 border-[#8a8a8a] bg-[#f2f2f2] shadow-[inset_1px_1px_0_#fff]"><svg class="size-5 bg-[#efeddf]"><use href="#i-add"/></svg></button>
        <button aria-label="Remove model" class="mr-[2px] flex h-[28px] w-[28px] items-center justify-center bg-[#f2f2f2] outline-4 outline-[#535aa3]"><svg class="size-5 bg-[#efeddf]"><use href="#i-remove"/></svg></button>
        <button aria-label="Fit" class="flex h-[30px] w-[29px] items-center justify-center border-r-2 border-b-2 border-[#8a8a8a] bg-[#f2f2f2] shadow-[inset_1px_1px_0_#fff]"><svg class="size-5 bg-[#efeddf]"><use href="#i-fit"/></svg></button>
        <button aria-label="Pan" class="flex h-[30px] w-[30px] items-center justify-center border-r-2 border-b-2 border-[#8a8a8a] bg-[#f2f2f2] shadow-[inset_1px_1px_0_#fff]"><svg class="size-5 bg-[#efeddf]"><use href="#i-pan"/></svg></button>
        <button aria-label="Zoom" class="flex h-[30px] w-[29px] items-center justify-center border-r-2 border-b-2 border-[#8a8a8a] bg-[#f2f2f2] shadow-[inset_1px_1px_0_#fff]"><svg class="size-5 bg-[#efeddf]"><use href="#i-zoom"/></svg></button>
        <button aria-label="Shrink" class="flex h-[30px] w-[30px] items-center justify-center border-r-2 border-b-2 border-[#8a8a8a] bg-[#f2f2f2] shadow-[inset_1px_1px_0_#fff]"><svg class="size-5 bg-[#efeddf]"><use href="#i-zoom-in"/></svg></button>
        <button aria-label="Previous zoom" class="flex h-[30px] w-[29px] items-center justify-center border-r-2 border-b-2 border-[#8a8a8a] bg-[#f2f2f2] shadow-[inset_1px_1px_0_#fff]"><svg class="size-5 bg-[#efeddf]"><use href="#i-zoom-back"/></svg></button>
        <button aria-label="Toggle" class="flex h-[30px] w-[30px] items-center justify-center border-r-2 border-b-2 border-[#8a8a8a] bg-[#f2f2f2] shadow-[inset_1px_1px_0_#fff]"><svg class="size-5 bg-[#efeddf]"><use href="#i-toggle"/></svg></button>
        <button aria-label="Redraw" class="flex h-[30px] w-[29px] items-center justify-center border-r-2 border-b-2 border-[#8a8a8a] bg-[#f2f2f2] shadow-[inset_1px_1px_0_#fff]"><svg class="size-5 bg-[#efeddf]"><use href="#i-brush"/></svg></button>
        <button aria-label="Print" class="flex h-[30px] w-[30px] items-center justify-center border-r-2 border-b-2 border-[#8a8a8a] bg-[#f2f2f2] shadow-[inset_1px_1px_0_#fff]"><svg class="size-5 bg-[#efeddf]"><use href="#i-print"/></svg></button>
        <button aria-label="Copy view" class="flex h-[30px] w-[29px] items-center justify-center border-r-2 border-b-2 border-[#8a8a8a] bg-[#f2f2f2] shadow-[inset_1px_1px_0_#fff]"><svg class="size-5 bg-[#efeddf]"><use href="#i-copy"/></svg></button>
        <button aria-label="Culture" class="flex h-[30px] w-[30px] items-center justify-center border-r-2 border-b-2 border-[#8a8a8a] bg-[#f2f2f2] shadow-[inset_1px_1px_0_#fff]"><svg class="size-5 bg-[#efeddf]"><use href="#i-building"/></svg></button>
        <button aria-label="Favourites" class="flex h-[30px] w-[29px] items-center justify-center border-r-2 border-b-2 border-[#8a8a8a] bg-[#f2f2f2] shadow-[inset_1px_1px_0_#fff]"><svg class="size-5 bg-[#efeddf]"><use href="#i-star"/></svg></button>
        <button aria-label="View favourites" class="flex h-[30px] w-[30px] items-center justify-center border-r-2 border-b-2 border-[#8a8a8a] bg-[#f2f2f2] shadow-[inset_1px_1px_0_#fff]"><svg class="size-5 bg-[#efeddf]"><use href="#i-star-blue"/></svg></button>
        <button aria-label="Layout" class="flex h-[30px] w-[29px] items-center justify-center border-r-2 border-b-2 border-[#8a8a8a] bg-[#f2f2f2] shadow-[inset_1px_1px_0_#fff]"><svg class="size-5"><use href="#i-split"/></svg></button>
      </div>

      <div class="relative min-h-0 flex-1 overflow-hidden bg-[#bababa]">
        <!-- Pad outline -->
        <svg class="absolute top-0 left-0 size-full" fill="none">
          <path d="M501 106L561 48L656 145L661 148L722 211L727 214L787 277L792 280L850 341L855 344L884 376L860 400L856 402L807 450L803 452L757 498L753 500L730 526L697 493L692 490L632 428L627 425L568 363L563 360L501 295" stroke="#3c3ac8" stroke-width="2.600"/>
          <path d="M561 42v11M556 48h11M884 371v11M879 376.500h11M730 521v11M725 526.500h11" stroke="#a32be8" stroke-width="1.500"/>
        </svg>

        <!-- Models to remove dialog -->
        <section class="absolute top-[2px] bottom-0 left-[23px] flex w-[481px] flex-col bg-[#f0f0f0] shadow-[0_0_18px_rgba(0,0,0,0.6)]">
          <header class="flex h-[39px] shrink-0 items-center justify-between bg-[#7a7373] pr-px pl-[10px] text-white">
            <h1>Models to Remove from "DESIGN"</h1>
            <button aria-label="Close" class="mt-1 flex size-[25px] items-center justify-center bg-[#c75050]"><svg class="size-2" viewBox="0 0 8 8"><path d="M1 1l6 6M7 1L1 7" stroke="#fff" stroke-width="1.800"/></svg></button>
          </header>
          <div class="flex shrink-0 gap-[3px] pt-[5px] pl-2">
            <button aria-label="List" class="flex h-[30px] w-[29px] items-center justify-center border-t-2 border-l-2 border-[#8a8a8a] bg-[#f7f7f7]"><svg class="size-5 bg-[#efeddf] p-[2px]"><use href="#i-list" width="16" height="16"/></svg></button>
            <button aria-label="Layers" class="flex h-[30px] w-[30px] items-center justify-center border-r-2 border-b-2 border-[#8a8a8a] bg-[#f2f2f2] shadow-[inset_1px_1px_0_#fff]"><svg class="size-5 bg-[#efeddf]"><use href="#i-layers"/></svg></button>
            <button aria-label="Load" class="flex h-[30px] w-[30px] items-center justify-center border-r-2 border-b-2 border-[#8a8a8a] bg-[#f2f2f2] shadow-[inset_1px_1px_0_#fff]"><svg class="size-5 bg-[#efeddf]"><use href="#i-download"/></svg></button>
          </div>
          <div class="flex shrink-0 items-center pt-[5px] pb-[3px] pl-2">
            <label class="flex h-6 flex-1 items-center border-t-2 border-l-2 border-[#858585] bg-white pl-[5px]"><span class="h-5 w-[2px] bg-[#222]"></span><input type="text" aria-label="Filter" class="min-w-0 flex-1"></label>
            <button aria-label="Find" class="ml-[3px] flex h-[27px] w-[26px] items-center justify-center border-r-2 border-b-2 border-[#8a8a8a] bg-[#f2f2f2] shadow-[inset_1px_1px_0_#fff]"><svg class="size-5 bg-[#efeddf]"><use href="#i-glass"/></svg></button>
            <button class="ml-[5px] w-[22px] text-base text-[#333]">Aa</button>
            <button class="mr-[6px] ml-[5px] flex w-[21px] items-center text-sm leading-[15px] font-bold text-[#2b86d0]"><span class="border-y border-[#2b86d0]">Ab</span><span class="h-3 w-px bg-[#2b86d0]"></span></button>
          </div>
          <ul class="ml-[5px] flex-1 border-t border-l border-[#6b6b6b] bg-white">
            <li class="flex h-[29px] items-center border-b border-[#dedede] pl-1">Design Pad</li>
          </ul>
        </section>
      </div>
    </main>
  </div>

  <!-- Annotation: remove button -->
  <div class="absolute top-[71px] left-[162px] h-[48px] w-[225px] border-2 border-[#535aa3] bg-white pt-[2px] text-center font-['Liberation_Sans',sans-serif] text-base leading-[19px] text-black">
    Hit the <b>&lt;-&gt;</b> button to see<br>which models are on the view
    <svg class="absolute top-[20px] -left-[31px] h-6 w-8" viewBox="0 0 32 24"><path d="M31 3L2 22l29-6" fill="#fff" stroke="#535aa3" stroke-width="2"/><path d="M29 4h3v11h-3z" fill="#fff"/></svg>
  </div>

  <!-- Mouse pointer -->
  <svg class="absolute top-[366px] left-[223px] h-5 w-4" viewBox="0 0 16 20"><path d="M2 1v17l4-4 3 6 3-2-3-5h5z" fill="#fff" stroke="#222" stroke-width="1.200"/></svg>

  <!-- Annotation: listed model -->
  <div class="absolute top-[256px] left-[69px] h-[34px] w-[102px] border-4 border-[#535aa3]"></div>
  <div class="absolute top-[320px] left-[89px] h-[51px] w-[191px] border-2 border-[#535aa3] bg-white pt-[2px] text-center font-['Liberation_Sans',sans-serif] text-base leading-[19px] text-black">
    The 'Design Pad' model<br>is on the Design View
    <svg class="absolute -top-[32px] left-[29px] h-8 w-[68px]" viewBox="0 0 68 32"><path d="M2 31L33 1l33 30" fill="#fff" stroke="#535aa3" stroke-width="2"/><path d="M4 29h60v3H4z" fill="#fff"/></svg>
  </div>
</body>
</html>
